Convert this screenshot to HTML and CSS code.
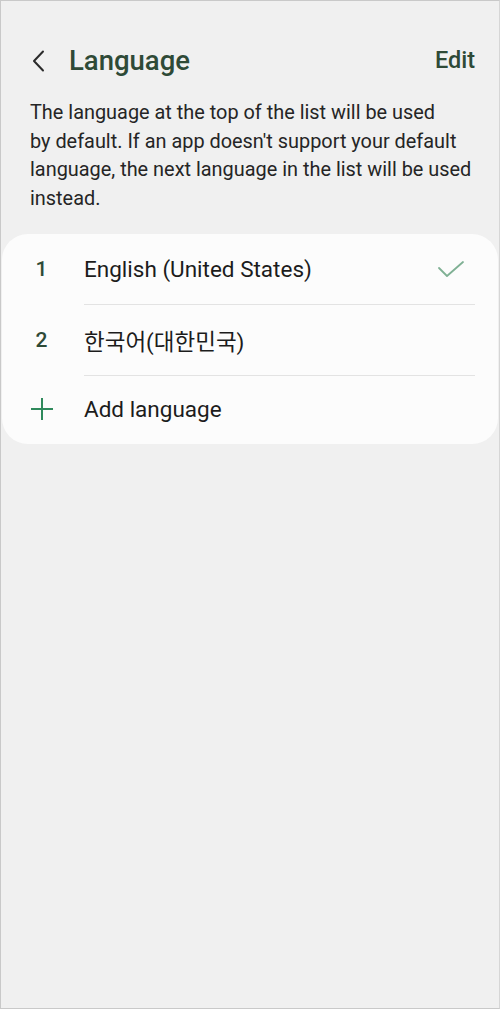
FILE: index.html
```html
<!DOCTYPE html>
<html lang="en">
<head>
    <meta charset="UTF-8">
    <meta name="viewport" content="width=device-width, initial-scale=1.0">
    <title>Language</title>
    <link rel="stylesheet" href="styles.css">
</head>
<body>
    <div class="screen">
        <header class="top-bar">
            <div class="title-group">
                <svg class="back" width="14" height="22" viewBox="0 0 14 22">
                    <path d="M12 1.5 L3 11 L12 20.5" fill="none" stroke="#2b2b2b" stroke-width="2" stroke-linecap="round" stroke-linejoin="round"/>
                </svg>
                <h1>Language</h1>
            </div>
            <span class="edit">Edit</span>
        </header>

        <p class="info">The language at the top of the list will be used by&nbsp;default. If an app doesn't support your default language, the next language in the list will be used instead.</p>

        <div class="card">
            <div class="row">
                <span class="num">1</span>
                <span class="label divided">English (United States)
                    <svg class="check" width="28" height="18" viewBox="0 0 28 18">
                        <path d="M2 8 L10 16 L26 2" fill="none" stroke="#7fb094" stroke-width="1.8" stroke-linecap="round" stroke-linejoin="round"/>
                    </svg>
                </span>
            </div>
            <div class="row">
                <span class="num">2</span>
                <span class="label divided">한국어(대한민국)</span>
            </div>
            <div class="row last">
                <span class="num">
                    <svg width="24" height="24" viewBox="0 0 24 24">
                        <path d="M12 1 V23 M1 12 H23" stroke="#2f8a5c" stroke-width="2"/>
                    </svg>
                </span>
                <span class="label">Add language</span>
            </div>
        </div>
    </div>
</body>
</html>
```

FILE: styles.css
```css
html, body {
    margin: 0;
    padding: 0;
}

body {
    background-color: #f0f0f0;
    font-family: Roboto, "Noto Sans CJK KR", sans-serif;
    color: #1f1f1f;
}

.screen {
    border: 1px solid #c9c9c9;
    border-right-color: #d6d6d6;
    box-sizing: border-box;
    height: 1009px;
}

.top-bar {
    display: flex;
    justify-content: space-between;
    align-items: center;
    padding: 41px 24px 0 30px;
    height: 36px;
}

.title-group {
    display: flex;
    align-items: center;
    gap: 24px;
}

.back {
    margin-top: 2px;
}

h1 {
    margin: 0;
    font-size: 27.5px;
    font-weight: 500;
    color: #2e4a37;
}

.edit {
    font-size: 23.5px;
    font-weight: 500;
    color: #2e4a37;
}

.info {
    margin: 21px 26px 0 29px;
    font-size: 19.9px;
    line-height: 28.7px;
    color: #252525;
}

.card {
    margin: 20px 1px 0 1px;
    background-color: #fcfcfc;
    border-radius: 26px;
    padding: 0;
}

.row {
    display: flex;
    align-items: stretch;
    height: 71px;
}

.row.last {
    height: 67px;
    padding-bottom: 1px;
}

.num {
    width: 82px;
    display: flex;
    align-items: center;
    justify-content: center;
    padding-right: 3px;
    box-sizing: border-box;
    font-size: 21px;
    font-weight: 500;
    color: #2e4a37;
}

.label {
    flex: 1;
    display: flex;
    align-items: center;
    justify-content: space-between;
    margin-right: 23px;
    font-size: 22.5px;
    color: #1c1c1c;
}

.divided {
    border-bottom: 1px solid #e3e3e3;
}

.check {
    margin-right: 10px;
}
```
